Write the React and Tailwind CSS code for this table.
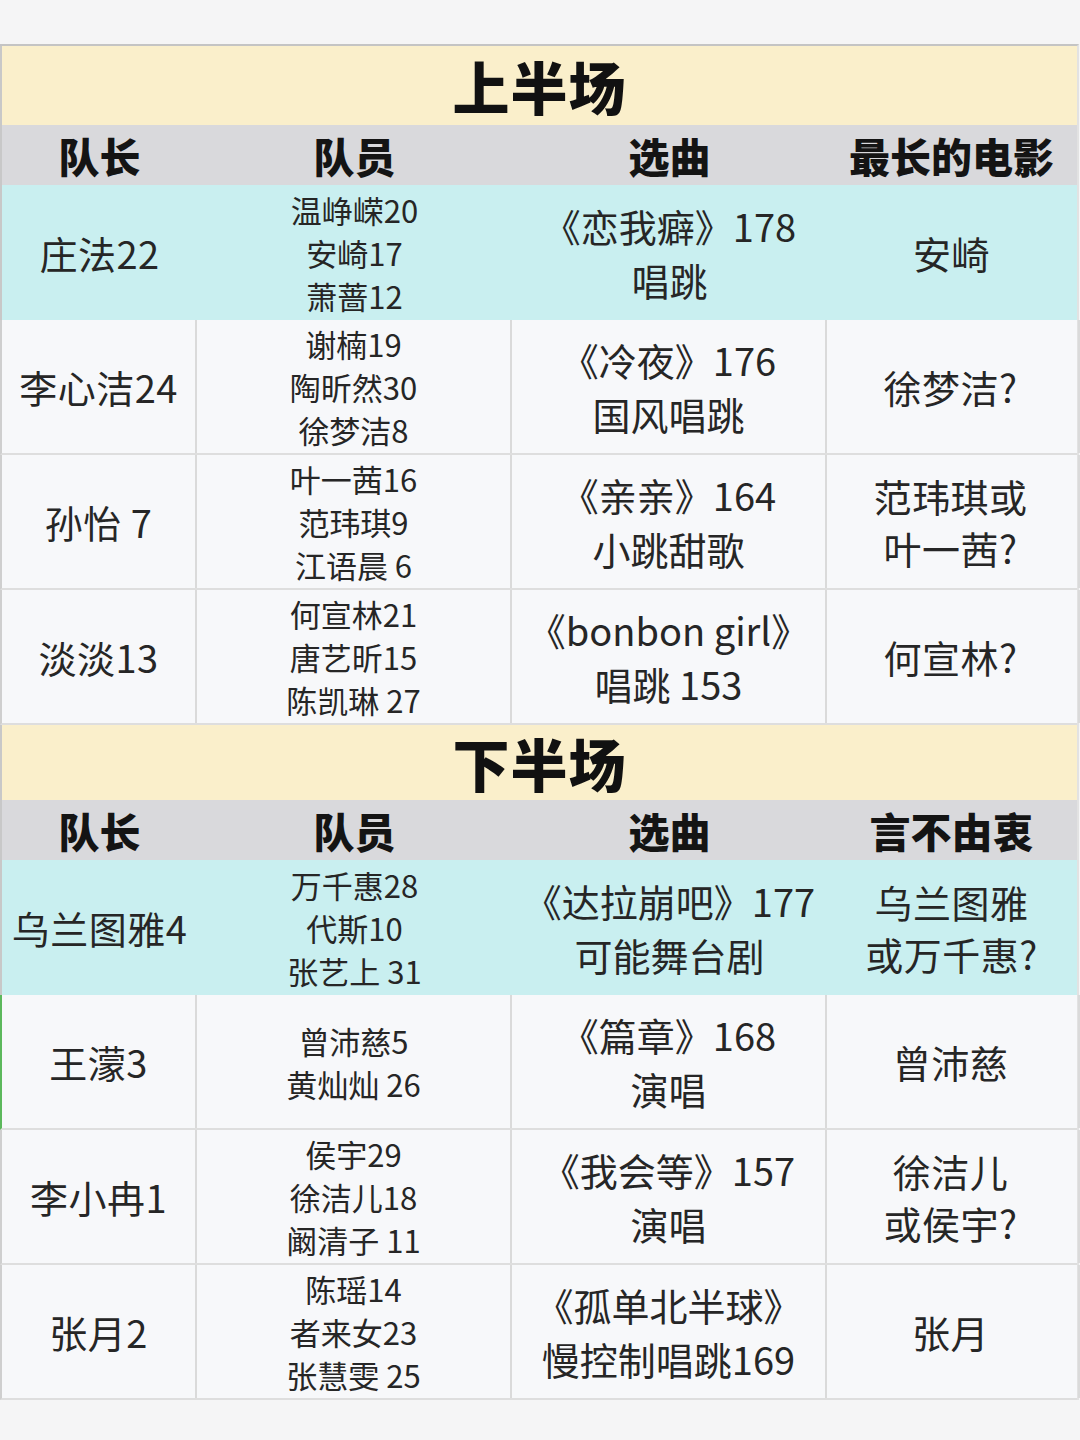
import React from "react";

const FONT = { fontFamily: '"Microsoft YaHei", "Noto Sans CJK SC", "Noto Sans", sans-serif' };

const TOP = {
  title: "上半场",
  lastHead: "最长的电影",
  rows: [
    { cap: "庄法22", members: ["温峥嵘20", "安崎17", "萧蔷12"], song: ["《恋我癖》178", "唱跳"], pick: ["安崎"], hot: true },
    { cap: "李心洁24", members: ["谢楠19", "陶昕然30", "徐梦洁8"], song: ["《冷夜》176", "国风唱跳"], pick: ["徐梦洁?"] },
    { cap: "孙怡 7", members: ["叶一茜16", "范玮琪9", "江语晨 6"], song: ["《亲亲》164", "小跳甜歌"], pick: ["范玮琪或", "叶一茜?"] },
    { cap: "淡淡13", members: ["何宣林21", "唐艺昕15", "陈凯琳 27"], song: ["《bonbon girl》", "唱跳 153"], pick: ["何宣林?"] },
  ],
};

const BOTTOM = {
  title: "下半场",
  lastHead: "言不由衷",
  rows: [
    { cap: "乌兰图雅4", members: ["万千惠28", "代斯10", "张艺上 31"], song: ["《达拉崩吧》177", "可能舞台剧"], pick: ["乌兰图雅", "或万千惠?"], hot: true },
    { cap: "王濛3", members: ["曾沛慈5", "黄灿灿 26"], song: ["《篇章》168", "演唱"], pick: ["曾沛慈"], green: true },
    { cap: "李小冉1", members: ["侯宇29", "徐洁儿18", "阚清子 11"], song: ["《我会等》157", "演唱"], pick: ["徐洁儿", "或侯宇?"] },
    { cap: "张月2", members: ["陈瑶14", "者来女23", "张慧雯 25"], song: ["《孤单北半球》", "慢控制唱跳169"], pick: ["张月"] },
  ],
};

function Lines({ items, size }) {
  return (
    <div className={size}>
      {items.map((t, i) => (
        <div key={i} className="whitespace-nowrap">{t}</div>
      ))}
    </div>
  );
}

function Row({ row }) {
  const cell = row.hot
    ? "flex items-center justify-center text-center"
    : "flex items-center justify-center text-center border-r-2 border-[#dadada]";
  return (
    <div
      className={`grid grid-cols-[195px_315px_315px_253px] h-[135px] text-[#262626] border-l-2 ${
        row.hot ? "bg-[#c9eff0] border-[#c8c8c8]" : "bg-[#f7f8fa] border-b-2 border-b-[#dedede]"
      } ${row.green ? "border-l-[#5cb85c]" : row.hot ? "" : "border-l-[#cfcfcf]"}`}
    >
      <div className={`${cell} text-[38px] tracking-[0.5px]`}>{row.cap}</div>
      <div className={cell}>
        <Lines items={row.members} size="text-[31px] leading-[43px]" />
      </div>
      <div className={cell}>
        <Lines items={row.song} size="text-[38px] leading-[54px]" />
      </div>
      <div className={`${cell} pr-[4px]`}>
        <Lines items={row.pick} size="text-[38px] leading-[52px] tracking-[0.5px]" />
      </div>
    </div>
  );
}

function Section({ data, titleH }) {
  return (
    <div>
      <div className={`${titleH} bg-[#faefcb] border-l-2 border-[#c8c8c8] flex items-center justify-center`}>
        <span className="text-[57px] font-black text-[#111] tracking-[1px]">{data.title}</span>
      </div>
      <div className="grid grid-cols-[195px_315px_315px_253px] h-[60px] bg-[#d9d9dc] border-l-2 border-[#c8c8c8] text-[41px] font-black text-[#141414]">
        <div className="flex items-center justify-center">队长</div>
        <div className="flex items-center justify-center">队员</div>
        <div className="flex items-center justify-center">选曲</div>
        <div className="flex items-center justify-center pr-[4px]">{data.lastHead}</div>
      </div>
      {data.rows.map((r, i) => (
        <Row key={i} row={r} />
      ))}
    </div>
  );
}

export default function App() {
  return (
    <div className="w-[1080px] h-[1440px] bg-[#f5f5f6] pt-[44px] overflow-hidden" style={FONT}>
      <div className="w-[1079px] border-t-2 border-[#c4c4c4] border-r-2 border-r-[#e2e2e2]">
        <Section data={TOP} titleH="h-[79px]" />
        <Section data={BOTTOM} titleH="h-[75px]" />
      </div>
    </div>
  );
}
